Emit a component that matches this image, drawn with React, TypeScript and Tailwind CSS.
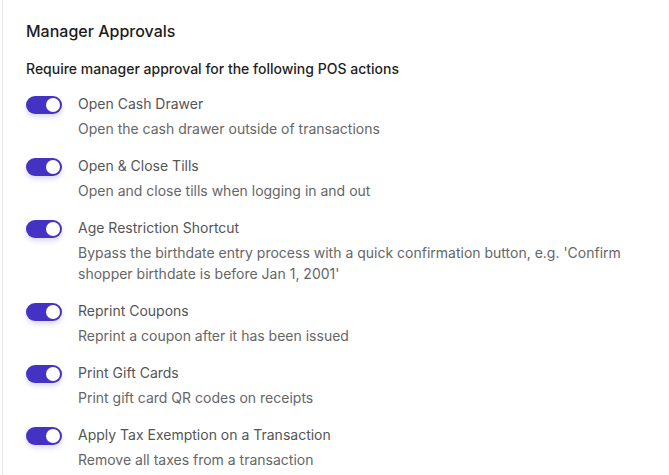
import React, { useState } from 'react';

type Approval = {
  id: string;
  title: string;
  description: string;
};

const approvals: Approval[] = [
  { id: 'cash-drawer', title: 'Open Cash Drawer', description: 'Open the cash drawer outside of transactions' },
  { id: 'tills', title: 'Open & Close Tills', description: 'Open and close tills when logging in and out' },
  {
    id: 'age-restriction',
    title: 'Age Restriction Shortcut',
    description:
      "Bypass the birthdate entry process with a quick confirmation button, e.g. 'Confirm shopper birthdate is before Jan 1, 2001'",
  },
  { id: 'reprint-coupons', title: 'Reprint Coupons', description: 'Reprint a coupon after it has been issued' },
  { id: 'gift-cards', title: 'Print Gift Cards', description: 'Print gift card QR codes on receipts' },
  { id: 'tax-exemption', title: 'Apply Tax Exemption on a Transaction', description: 'Remove all taxes from a transaction' },
];

function Toggle({ checked, onChange }: { checked: boolean; onChange: () => void }) {
  return (
    <button
      type="button"
      role="switch"
      aria-checked={checked}
      onClick={onChange}
      className={`relative mt-[2px] h-[18px] w-9 shrink-0 rounded-full shadow-[0_3px_5px_rgba(60,40,180,0.18)] transition-colors ${
        checked ? 'bg-[#4432c4]' : 'bg-gray-300'
      }`}
    >
      <span
        className={`absolute top-[2px] h-[14px] w-[14px] rounded-full bg-white transition-all ${
          checked ? 'left-[20px]' : 'left-[2px]'
        }`}
      />
    </button>
  );
}

export default function App() {
  const [enabled, setEnabled] = useState<Record<string, boolean>>(
    Object.fromEntries(approvals.map((a) => [a.id, true]))
  );

  const toggle = (id: string) => setEnabled((prev) => ({ ...prev, [id]: !prev[id] }));

  return (
    <div className="min-h-screen bg-white font-['Inter',sans-serif]">
      <div className="ml-[2px] min-h-screen border-l border-[#e6e6e6] pl-[23px] pr-6 pt-[19px]">
        <h2 className="text-base font-medium leading-6 text-[#1c1c1c]">Manager Approvals</h2>
        <p className="mt-4 text-sm font-medium leading-5 text-[#1f1f1f]">
          Require manager approval for the following POS actions
        </p>

        <div className="mt-[15px] flex flex-col gap-[17px]">
          {approvals.map((a) => (
            <div key={a.id} className="flex items-start gap-4">
              <Toggle checked={enabled[a.id]} onChange={() => toggle(a.id)} />
              <div className="min-w-0">
                <div className="text-sm leading-5 text-[#555555]">{a.title}</div>
                <div className="mt-1 text-sm leading-[21px] text-[#666666]">{a.description}</div>
              </div>
            </div>
          ))}
        </div>
      </div>
    </div>
  );
}
